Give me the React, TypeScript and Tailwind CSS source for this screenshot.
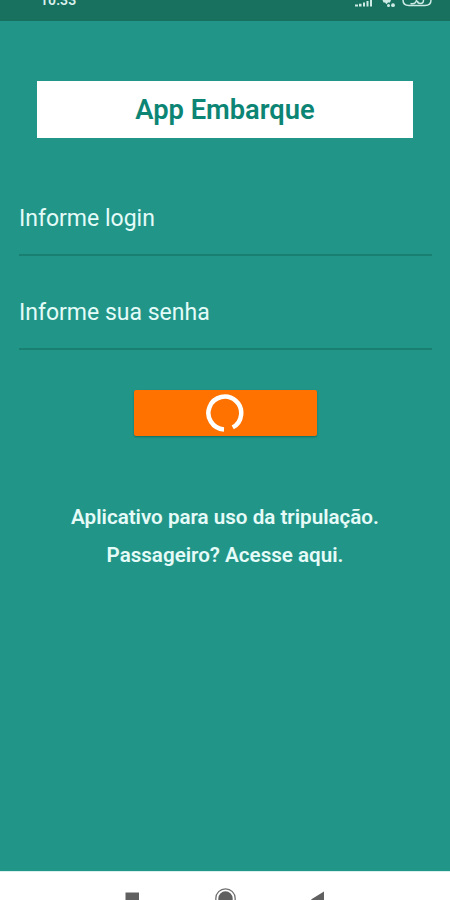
import React from "react";

function StatusBar() {
  return (
    <header className="flex h-[21px] items-start justify-between overflow-hidden bg-[#18705f] pr-[18px] pl-[40px]">
      <span className="-mt-[7px] text-[14px] leading-[15px] font-semibold tracking-[0.1px] text-[#d9f0ec]">10:33</span>
      <svg className="shrink-0" width="78" height="10" viewBox="0 0 78 10" fill="#cdebe5">
        <path d="M1 4.500h3v2H1zM5 3.800h2.500v2.700H5zM9 2.500h2v4H9zM12.500 1h2v5.500h-2zM16 0h2v6.500h-2z" />
        <path d="M28.500 0h8.500l-1 2.500h-2l-1.500 1.800-1.500-1.800h-1.500z" />
        <circle cx="34.500" cy="5.500" r="1.500" />
        <circle cx="39" cy="5.200" r="1.900" />
        <path d="M49-2.500v2.500q0 5.500 6 5.500h16q6 0 6-5.500v-2.500" fill="none" stroke="#cdebe5" strokeWidth="1.500" />
        <path d="M56.500 3.500q3 1 5-1l1.500-3M63.500 1q0 2.500 3 2.500t3-3.500" fill="none" stroke="#cdebe5" strokeWidth="1.500" />
      </svg>
    </header>
  );
}

function Field({ label }: { label: string }) {
  return (
    <div className="flex flex-1 flex-col justify-end border-b-2 border-[#197f71] pb-[21px]">
      <span className="text-[23px] leading-[28px] text-[#e4fbf8]">{label}</span>
    </div>
  );
}

function NavigationBar() {
  return (
    <nav className="flex h-[29px] items-start border-t border-[#d9f1ee] bg-white">
      <svg width="450" height="28" viewBox="0 0 450 28" fill="#606060">
        <path d="M125.500 20.500h13.500v13h-13.500z" />
        <circle cx="225.500" cy="26.500" r="7.200" />
        <circle cx="225.500" cy="26.500" r="9.700" fill="none" stroke="#707070" strokeWidth="1.300" />
        <path d="M324 19.500v16l-13-8z" />
      </svg>
    </nav>
  );
}

export default function App() {
  return (
    <div className="flex h-[900px] w-[450px] flex-col overflow-hidden bg-[#219688] font-['Roboto',sans-serif]">
      <StatusBar />
      <main className="flex flex-1 flex-col px-[18px]">
        <h1 className="mx-[19px] mt-[60px] flex h-[57px] items-center justify-center bg-white pt-[2px] text-[27.300px] font-semibold text-[#0d8575]">
          App Embarque
        </h1>
        <form className="mt-[23px] flex flex-col">
          <div className="ml-[1px] flex h-[189px] flex-col">
            <Field label="Informe login" />
            <Field label="Informe sua senha" />
          </div>
          <button
            type="button"
            aria-label="Entrar"
            className="mt-[40px] flex h-[46px] w-[183px] items-center justify-center self-center rounded-[2px] bg-[#ff7200] shadow-[0_1px_2px_rgba(0,70,60,0.5)]"
          >
            <svg width="38" height="38" viewBox="0 0 38 38" fill="none">
              <path d="M18 35.400A16.400 16.400 0 1 1 26.700 33.400" stroke="white" strokeWidth="4.500" />
            </svg>
          </button>
        </form>
        <div className="mt-[62px] flex flex-col items-center text-[20.600px] leading-[38px] font-semibold text-[#e6fbf8]">
          <p>Aplicativo para uso da tripulação.</p>
          <p>Passageiro? Acesse aqui.</p>
        </div>
      </main>
      <NavigationBar />
    </div>
  );
}
